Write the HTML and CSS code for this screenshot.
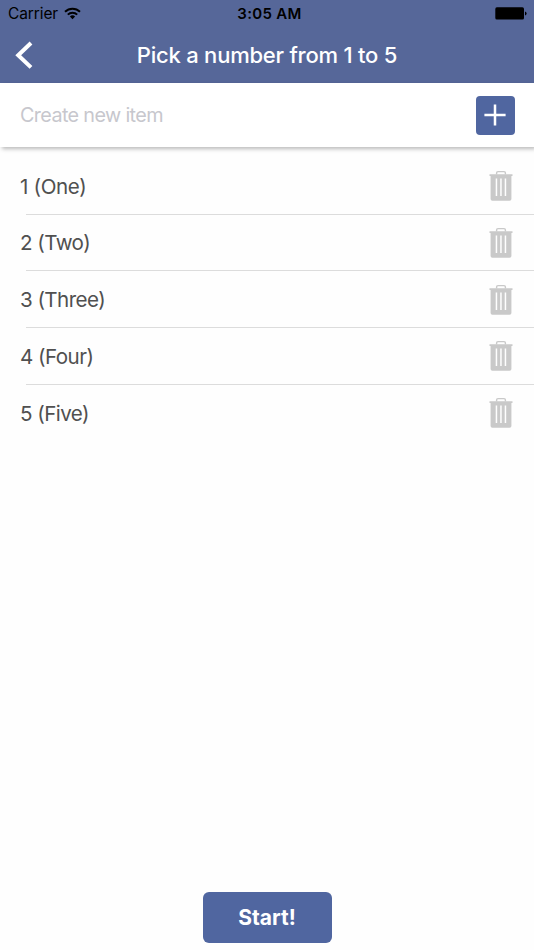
FILE: index.html
```html
<!DOCTYPE html>
<html lang="en">
<head>
<meta charset="utf-8">
<title>Pick a number from 1 to 5</title>
<link rel="stylesheet" href="styles.css">
</head>
<body>
<svg class="defs" aria-hidden="true">
  <symbol id="trash" viewBox="0 0 24 32">
    <path fill="none" stroke="#c9c9c9" stroke-width="1.4" d="M7.6 4.5V3q0-1.4 1.4-1.4h6q1.4 0 1.4 1.4v1.5"/>
    <path fill="#c9c9c9" fill-rule="evenodd" d="M.5 4.3h23v1.8h-1.1V29q0 1.8-1.8 1.8H3.4q-1.8 0-1.8-1.8V6.1H.5zM6.7 8.4v17.6h1.5V8.4zM11.2 8.4v17.6h1.5V8.4zM15.7 8.4v17.6h1.5V8.4z"/>
  </symbol>
</svg>
<div class="screen">
  <header class="header">
    <div class="status">
      <div class="carrier"><span>Carrier</span>
        <svg class="wifi" viewBox="0 0 17 13"><g fill="none" stroke="#000" stroke-width="2"><path d="M1 4.7a10.7 10.7 0 0 1 15 0"/><path d="M3.8 7.6a6.7 6.7 0 0 1 9.4 0"/></g><path d="M8.5 12.2 5.9 9.6a3.7 3.7 0 0 1 5.2 0z"/></svg>
      </div>
      <span class="time">3:05 AM</span>
      <svg class="battery" viewBox="0 0 32 13"><rect x=".3" y=".3" width="28.7" height="12.2" rx="1.6"/><path d="M30 4.5q1.6.3 1.6 2t-1.6 2z"/></svg>
    </div>
    <nav class="nav">
      <svg class="back" viewBox="0 0 18 28"><path fill="none" stroke="#fff" stroke-width="4" d="M16 2 3.2 14.2 16 26.4"/></svg>
      <h1 class="title">Pick a number from 1 to 5</h1>
    </nav>
  </header>
  <div class="create">
    <span class="placeholder">Create new item</span>
    <button class="add" aria-label="Add"><svg viewBox="0 0 22 22"><path stroke="#fff" stroke-width="2.5" d="M11 .4v21.2M.4 11h21.2"/></svg></button>
  </div>
  <ul class="list">
    <li class="item"><span class="label one">1 (One)</span><svg class="trash"><use href="#trash"/></svg></li>
    <li class="item"><span class="label">2 (Two)</span><svg class="trash"><use href="#trash"/></svg></li>
    <li class="item"><span class="label">3 (Three)</span><svg class="trash"><use href="#trash"/></svg></li>
    <li class="item"><span class="label">4 (Four)</span><svg class="trash"><use href="#trash"/></svg></li>
    <li class="item"><span class="label">5 (Five)</span><svg class="trash"><use href="#trash"/></svg></li>
  </ul>
  <button class="start">Start!</button>
</div>
</body>
</html>
```
FILE: styles.css
```css
* { box-sizing: border-box; }
body { margin: 0; background: #fefefe; font-family: Inter, "Liberation Sans", sans-serif; }
button { border: 0; padding: 0; font-family: inherit; color: #fff; background: #5066a0; }
.defs { display: block; width: 0; height: 0; }
.screen { width: 534px; height: 950px; display: flex; flex-direction: column; overflow: hidden; }
.header { height: 82.7px; flex: none; background: #566799; }
.status { height: 27px; display: grid; grid-template-columns: 1fr auto 1fr; align-items: center; padding: 0 7px 0 8px; font-size: 15.5px; color: #000; }
.carrier { display: flex; align-items: center; gap: 6px; letter-spacing: -.1px; }
.wifi { width: 17px; height: 13px; }
.time { font-weight: 600; font-size: 15px; letter-spacing: .3px; margin-left: 4px; }
.battery { width: 32px; height: 13px; justify-self: end; }
.nav { height: 55px; display: grid; grid-template-columns: 34px 1fr 34px; align-items: center; }
.back { width: 18px; height: 28px; margin-left: 15px; }
.title { margin: 0; text-align: center; color: #fff; font-size: 22px; line-height: 28px; font-weight: 500; letter-spacing: -.22px; white-space: nowrap; }
.create { height: 64.8px; flex: none; display: flex; align-items: center; justify-content: space-between; padding: 0 19.5px 0 20px; background: #fff; box-shadow: 2px 2px 4px rgba(0,0,0,.27); }
.placeholder { font-size: 19.8px; letter-spacing: -.63px; color: #c7c7cd; }
.add { width: 39px; height: 39px; border-radius: 4px; display: flex; align-items: center; justify-content: center; }
.add svg { width: 22px; height: 22px; }
.list { list-style: none; margin: 10.3px 0 0; padding: 0; }
.item { height: 56.75px; display: flex; align-items: center; justify-content: space-between; padding: 0 21px 0 20px; background: linear-gradient(#dcdcdc, #dcdcdc) 26px 100% / 100% 1px no-repeat; }
.item:last-child { background: none; }
.label { font-size: 20.6px; letter-spacing: -.55px; color: #505050; }
.one { letter-spacing: -.35px; }
.trash { width: 24px; height: 32px; }
.start { width: 129px; height: 51.5px; margin: auto auto 7px 202.5px; flex: none; border-radius: 6px; font-size: 21px; font-weight: 700; }
```
